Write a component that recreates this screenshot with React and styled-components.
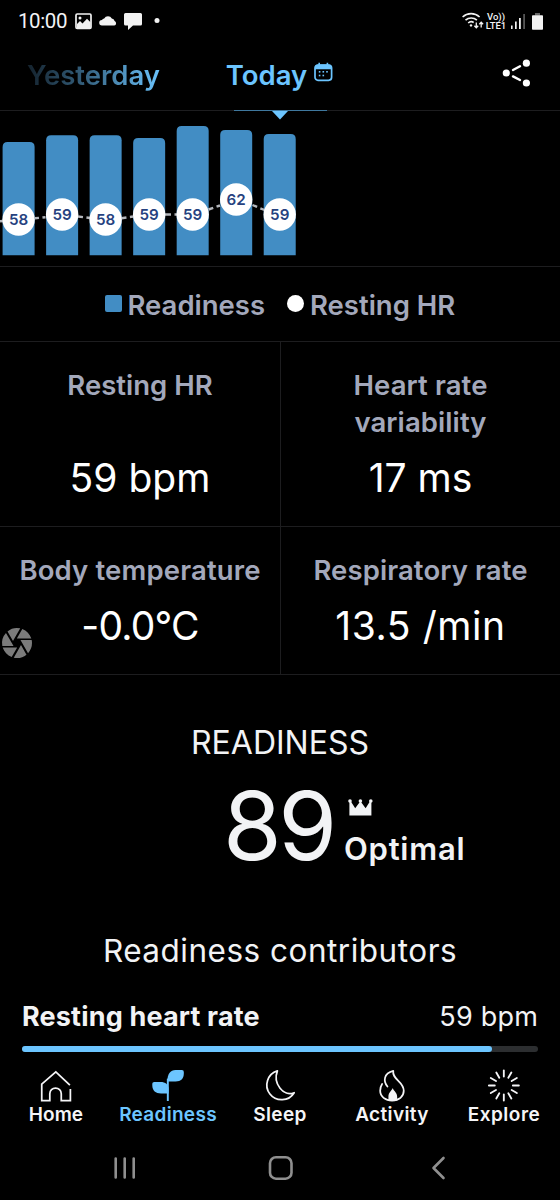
import React from "react";
import styled, { createGlobalStyle } from "styled-components";
import { MdCamera } from "react-icons/md";

const Global = createGlobalStyle`
  * { box-sizing: border-box; }
  html, body { margin: 0; background: #000; }
  body { font-family: Inter, "Liberation Sans", sans-serif; color: #f2f3f5; }
  svg { display: block; flex: none; }
`;

const blue = "#6cc5ff";
const muted = "#a3a8bb";
const rule = "#1d1d1f";

const Screen = styled.div`
  position: relative;
  width: 560px;
  height: 1200px;
  overflow: hidden;
  background: #000;
  display: flex;
  flex-direction: column;
`;

const Label = styled.span`
  font-size: ${(p) => p.$size}px;
  font-weight: ${(p) => p.$weight || 400};
  letter-spacing: ${(p) => p.$ls || 0}px;
  line-height: ${(p) => p.$lh || p.$size}px;
  color: ${(p) => p.$color || "inherit"};
  white-space: pre;
`;

const StatusBar = styled.header`
  height: 42px;
  padding: 0 17px 0 18px;
  display: flex;
  align-items: center;
  justify-content: space-between;
`;
const StatusGroup = styled.div`
  display: flex;
  align-items: center;
  gap: ${(p) => p.$gap || 0}px;
  margin-left: ${(p) => p.$ml || 0}px;
`;
const Clock = styled.span`
  font: 400 20.5px/24px Roboto, sans-serif;
  letter-spacing: -0.4px;
  width: 57px;
`;
const Network = styled.div`
  font: 500 9.5px/9.5px Roboto, sans-serif;
  width: 24px;
  text-align: center;
  margin: 0 3px 0 0;
`;

const DayNav = styled.nav`
  height: 69px;
  display: grid;
  grid-template-columns: 1fr 1fr 1fr;
  align-items: center;
  border-bottom: 1px solid ${rule};
  padding: 0 29px 3px 27px;
  position: relative;
`;
const Yesterday = styled(Label)`
  line-height: 36px;
  background: linear-gradient(90deg, #14222d 0%, #35617f 35%, ${blue} 80%);
  background-clip: text;
  -webkit-background-clip: text;
  color: transparent;
`;
const Today = styled.div`
  display: flex;
  justify-content: center;
  align-items: center;
  gap: 7px;
  color: ${blue};
  padding-left: 1px;
  svg { margin-top: -6px; }
`;
const Share = styled.div`
  justify-self: end;
  margin-top: -4px;
`;
const ActiveMark = styled.div`
  position: absolute;
  left: 233.5px;
  top: 68px;
  width: 93px;
  border-top: 1px solid #3f789e;
  display: flex;
  justify-content: center;
`;

const ChartPanel = styled.section`
  height: 156px;
  border-bottom: 1px solid ${rule};
`;

const Legend = styled.div`
  height: 75px;
  border-bottom: 1px solid ${rule};
  display: flex;
  align-items: center;
  padding-left: 104.5px;
  padding-top: 4px;
`;
const Swatch = styled.i`
  width: 17px;
  height: 17px;
  margin: -5px ${(p) => p.$gap}px 0 0;
  border-radius: ${(p) => (p.$round ? "50%" : "2px")};
  background: ${(p) => (p.$round ? "#fff" : "#428dc4")};
`;
const LegendItem = styled.div`
  display: flex;
  align-items: center;
  width: ${(p) => p.$w}px;
`;

const Metrics = styled.section`
  display: grid;
  grid-template-columns: 281px 279px;
  grid-template-rows: 185px 148px;
`;
const Metric = styled.div`
  display: flex;
  flex-direction: column;
  align-items: center;
  justify-content: space-between;
  padding: 25px 0 24px;
  text-align: center;
  border-bottom: 1px solid ${rule};
  &:nth-child(odd) { border-right: 1px solid ${rule}; }
`;

const Score = styled.section`
  padding-top: 49px;
  display: flex;
  flex-direction: column;
  align-items: center;
`;
const ScoreRow = styled.div`
  display: flex;
  height: 96px;
  margin-top: 16px;
  align-self: stretch;
  padding-left: 223px;
`;
const ScoreNumber = styled(Label)`
  width: 121px;
`;
const Rating = styled.div`
  display: flex;
  flex-direction: column;
  padding-top: 21px;
  gap: 15px;
`;
const Crown = styled.div`
  padding-left: 3.5px;
`;

const Contributors = styled.section`
  margin-top: 58px;
  padding: 0 22px;
  display: flex;
  flex-direction: column;
`;
const ContributorsTitle = styled(Label)`
  text-align: center;
`;
const ContributorRow = styled.div`
  display: flex;
  justify-content: space-between;
  margin: 29px 0 11px;
`;
const Track = styled.div`
  height: 6px;
  border-radius: 3px;
  background: #2c2e30;
`;
const Fill = styled.div`
  height: 6px;
  width: 91%;
  border-radius: 3px;
  background: ${blue};
`;

const TabBar = styled.nav`
  display: grid;
  grid-template-columns: repeat(5, 1fr);
  padding-top: 17px;
`;
const Tab = styled.div`
  display: flex;
  flex-direction: column;
  align-items: center;
  gap: 3px;
  color: ${(p) => (p.$active ? blue : "#f5f5f7")};
`;

const SystemBar = styled.footer`
  display: flex;
  align-items: center;
  justify-content: space-between;
  padding: 0 113px 0 112px;
  margin-top: 31px;
`;

const FloatingShutter = styled.div`
  position: absolute;
  left: -1.5px;
  top: 625px;
  color: #7b7b7b;
`;

const bars = [
  { top: 142, y: 219.5, v: 58 },
  { top: 135.3, y: 214.5, v: 59 },
  { top: 135.3, y: 219.5, v: 58 },
  { top: 138, y: 214.5, v: 59 },
  { top: 126, y: 214.5, v: 59 },
  { top: 130, y: 199.5, v: 62 },
  { top: 134, y: 214.5, v: 59 },
];
const barX = (i) => 18.6 + i * 43.52;

function Chart() {
  return (
    <svg width="560" height="155" viewBox="0 111 560 155">
      {bars.map((b, i) => (
        <path
          key={i}
          fill="#428dc4"
          d={`M${barX(i) - 16} 255.3V${b.top + 5}q0-5 5-5h22q5 0 5 5V255.3z`}
        />
      ))}
      <g fill="none" stroke="#b4b7bc" strokeWidth="2.4">
        <path d="M0 221.3L3 221" />
        <path d="M35 218.3L45.5 217.2" strokeDasharray="4 3.5" />
        <path d="M78 216.5L90 218" strokeDasharray="5 3.5" />
        <path d="M121.5 218.2L133 216.5" strokeDasharray="5 3.5" />
        <path d="M165 214.5H177" strokeDasharray="6 3.5" />
        <path d="M208.5 209.5L220 205.5" strokeDasharray="5 3.5" />
        <path d="M252.5 205L264.5 210" strokeDasharray="5 3.5" />
      </g>
      {bars.map((b, i) => (
        <g key={i}>
          <circle cx={barX(i)} cy={b.y} r="16.2" fill="#fff" />
          <text
            x={barX(i)}
            y={b.y + 5.5}
            textAnchor="middle"
            fontSize="15.2"
            fontWeight="600"
            fill="#26427f"
          >
            {b.v}
          </text>
        </g>
      ))}
    </svg>
  );
}

const PhotoIcon = () => (
  <svg width="17" height="17" viewBox="0 0 17 17">
    <rect x="1" y="1" width="15" height="14.5" rx="1.2" fill="none" stroke="#f2f2f2" strokeWidth="1.7" />
    <circle cx="5" cy="5" r="1.5" fill="#f2f2f2" />
    <path d="M2 13V11l3-3 2.5 2.5L12 5.8l3.5 3.4V15H2z" fill="#f2f2f2" />
  </svg>
);
const CloudIcon = () => (
  <svg width="18" height="12" viewBox="0 0 18 12">
    <path d="M3 10.5a2.8 2.8 0 0 1 0-5.6 2.6 2.6 0 0 1 2.2-1.5A4.3 4.3 0 0 1 12.800 3.500a3.600 3.600 0 0 1 2.800 2.600 2.300 2.300 0 0 1-.3 4.400z" fill="#f2f2f2" />
  </svg>
);
const ChatIcon = () => (
  <svg width="18" height="17" viewBox="0 0 18 17">
    <path d="M1.500 0h15A1.500 1.500 0 0 1 18 1.500V11a1.500 1.500 0 0 1-1.500 1.500H9L4 17v-4.500H1.500A1.500 1.500 0 0 1 0 11V1.500A1.500 1.500 0 0 1 1.500 0z" fill="#f2f2f2" />
  </svg>
);
const DotIcon = () => (
  <svg width="6" height="6" viewBox="0 0 6 6"><circle cx="3" cy="2.5" r="2.5" fill="#f2f2f2" /></svg>
);
const WifiIcon = () => (
  <svg width="22" height="18" viewBox="0 0 22 18" fill="none" stroke="#f2f2f2" strokeWidth="1.6">
    <path d="M.6 5a12.500 12.500 0 0 1 17 0M3.500 8.200a8.400 8.400 0 0 1 11.400 0M6.200 11a4.500 4.500 0 0 1 5.500-.5" />
    <circle cx="9" cy="13.4" r="1.2" fill="#f2f2f2" stroke="none" />
    <path d="M14.300 10.500v5M12.400 13.700l1.900 2 1.900-2M19.200 15.500v-5M17.300 12.300l1.900-2 1.900 2" strokeWidth="1.3" />
  </svg>
);
const SignalIcon = () => (
  <svg width="15" height="17" viewBox="0 0 15 17" fill="#f2f2f2">
    <rect x="0" y="12.5" width="1.6" height="3.5" />
    <rect x="4" y="8.5" width="1.7" height="7.5" />
    <rect x="8" y="5" width="1.8" height="11" />
    <rect x="12.2" y="1" width="1.8" height="15" fill="#555" />
  </svg>
);
const BatteryIcon = () => (
  <svg width="11" height="17" viewBox="0 0 11 17">
    <rect x="3" y="0" width="5" height="2.5" fill="#666" />
    <rect x="0" y="2.3" width="11" height="14.5" rx=".8" fill="#f2f2f2" />
  </svg>
);
const CalendarIcon = () => (
  <svg width="19" height="20" viewBox="0 0 19 20">
    <rect x="1" y="3" width="16.6" height="15.3" rx="3" fill="none" stroke={blue} strokeWidth="1.7" />
    <path d="M1 7.3V5.500A3 3 0 0 1 4 2.600h10.600a3 3 0 0 1 3 2.900V7.3z" fill={blue} />
    <path d="M5.200.8v3M13.400.8v3" stroke={blue} strokeWidth="1.6" />
    <g fill={blue}>
      <rect x="8.5" y="9" width="1.6" height="1.6" /><rect x="4.8" y="9" width="1.6" height="1.6" />
      <rect x="12.2" y="9" width="1.6" height="1.6" /><rect x="4.8" y="12.7" width="1.6" height="1.6" />
      <rect x="8.5" y="12.7" width="1.6" height="1.6" />
    </g>
  </svg>
);
const ShareIcon = () => (
  <svg width="29" height="28" viewBox="0 0 29 28" fill="#fff">
    <circle cx="4.3" cy="14" r="3.6" /><circle cx="24.4" cy="4.2" r="3.6" /><circle cx="24.4" cy="24" r="3.6" />
    <path d="M11 11l7-3.700M11 17.400l7 3.600" stroke="#fff" strokeWidth="2.4" strokeLinecap="round" />
  </svg>
);
const CrownIcon = () => (
  <svg width="25" height="17" viewBox="0 0 25 17" fill="#f2f3f5">
    <circle cx="2" cy="2" r="1.8" /><circle cx="12.4" cy="2" r="1.8" /><circle cx="22.8" cy="2" r="1.8" />
    <path d="M1.400 2.500L2.600 2l4.600 7.300L11.800 3h1.200l4.600 6.300L22.200 2l1.200.5V16.500H1.400z" />
  </svg>
);

const tabIcon = { width: 33, height: 33, viewBox: "0.7 0 34 34", fill: "none", stroke: "currentColor", strokeWidth: 1.8 };
const HomeIcon = () => (
  <svg {...tabIcon}><path d="M31.500 16.500L17 3 2.500 15.500V32.500h8.300V25.500a5.900 5.900 0 0 1 11.800 0v7h9.400V20.500" /></svg>
);
const LeafIcon = () => (
  <svg {...tabIcon}>
    <path d="M17 33V10" strokeWidth="2" />
    <path d="M16.500 13C16.500 5 19.500 1 25 1h6.500q2 0 2 2v1.500c0 5.500-3 8.500-8.500 8.500z" fill="currentColor" stroke="none" />
    <path d="M3 13.300h6.500c5 0 8.300 2.700 8.300 7V25.300H10c-5.500 0-9-3-9-8.500v-1.500q0-2 2-2z" fill="currentColor" stroke="none" />
  </svg>
);
const MoonIcon = () => (
  <svg {...tabIcon}><path d="M14.500 1.900A15.200 15.200 0 1 0 31.800 24.400C21 29 9.500 15 14.500 1.900z" strokeLinejoin="round" /></svg>
);
const FlameIcon = () => (
  <svg {...tabIcon} strokeLinecap="round" strokeLinejoin="round">
    <path d="M12.500 18C8 12.500 8.500 4.500 18.500 2c-1.500 9 10.800 10.500 10.800 20.500 0 6-5 10-12 10S5 28.500 5 22.500c0-3 .7-5 2-7" />
    <path d="M18 19.500c-1 2.500-4.500 4.500-4.500 9v4h9v-4c0-4.500-3.500-5.500-4.500-9z" fill="currentColor" stroke="none" />
  </svg>
);
const BurstIcon = () => (
  <svg {...tabIcon} strokeWidth="1.9" strokeLinecap="round">
    {[...Array(12)].map((_, i) => (
      <path key={i} d="M17 1.500v6.200" transform={`rotate(${i * 30} 17 17)`} />
    ))}
  </svg>
);

const metrics = [
  { name: "Resting HR", value: "59 bpm" },
  { name: "Heart rate\nvariability", value: "17 ms", nameLs: 0.1 },
  { name: "Body temperature", value: "-0.0°C", nameLs: 0.15, ls: -0.8 },
  { name: "Respiratory rate", value: "13.5 /min", nameLs: 0.1, ls: 0.6 },
];

const tabs = [
  { name: "Home", Icon: HomeIcon, ls: 0.05 },
  { name: "Readiness", Icon: LeafIcon, ls: 0.3, active: true },
  { name: "Sleep", Icon: MoonIcon, ls: 0.4 },
  { name: "Activity", Icon: FlameIcon, ls: 0.35 },
  { name: "Explore", Icon: BurstIcon, ls: 0.5 },
];

export default function App() {
  return (
    <Screen>
      <Global />
      <StatusBar>
        <StatusGroup>
          <Clock>10:00</Clock>
          <StatusGroup $gap={7}>
            <PhotoIcon /><CloudIcon /><ChatIcon />
          </StatusGroup>
          <StatusGroup $ml={12}><DotIcon /></StatusGroup>
        </StatusGroup>
        <StatusGroup>
          <WifiIcon />
          <Network>Vo))<br />LTE1</Network>
          <SignalIcon />
          <StatusGroup $ml={6}><BatteryIcon /></StatusGroup>
        </StatusGroup>
      </StatusBar>

      <DayNav>
        <Yesterday $size={27.5} $weight={600}>Yesterday</Yesterday>
        <Today>
          <Label $size={27.5} $weight={600} $lh={36}>Today</Label>
          <CalendarIcon />
        </Today>
        <Share><ShareIcon /></Share>
        <ActiveMark>
          <svg width="16" height="9" viewBox="0 0 16 9"><path d="M0 0h16L8 8.500z" fill={blue} /></svg>
        </ActiveMark>
      </DayNav>

      <ChartPanel><Chart /></ChartPanel>

      <Legend>
        <LegendItem $w={182.5}>
          <Swatch $gap={6} />
          <Label $size={27.5} $weight={600} $color={muted}>Readiness</Label>
        </LegendItem>
        <LegendItem $w={170}>
          <Swatch $round $gap={6} />
          <Label $size={27.5} $weight={600} $color={muted}>Resting HR</Label>
        </LegendItem>
      </Legend>

      <Metrics>
        {metrics.map((m) => (
          <Metric key={m.name}>
            <Label $size={27.5} $lh={37} $weight={600} $ls={m.nameLs} $color={muted}>{m.name}</Label>
            <Label $size={39} $lh={48} $ls={m.ls} $color="#fff">{m.value}</Label>
          </Metric>
        ))}
      </Metrics>

      <Score>
        <Label $size={32} $lh={38}>READINESS</Label>
        <ScoreRow>
          <ScoreNumber $size={95} $lh={96} $ls={-3.5}>89</ScoreNumber>
          <Rating>
            <Crown><CrownIcon /></Crown>
            <Label $size={31} $lh={36} $weight={600} $ls={0.75}>Optimal</Label>
          </Rating>
        </ScoreRow>
      </Score>

      <Contributors>
        <ContributorsTitle $size={31.5} $lh={38} $ls={0.5}>Readiness contributors</ContributorsTitle>
        <ContributorRow>
          <Label $size={27} $lh={36} $weight={700} $ls={0.17}>Resting heart rate</Label>
          <Label $size={27} $lh={36} $ls={0.2}>59 bpm</Label>
        </ContributorRow>
        <Track><Fill /></Track>
      </Contributors>

      <TabBar>
        {tabs.map(({ name, Icon, ls, active }) => (
          <Tab key={name} $active={active}>
            <Icon />
            <Label $size={19} $weight={600} $ls={ls}>{name}</Label>
          </Tab>
        ))}
      </TabBar>

      <SystemBar>
        <svg width="24" height="24" viewBox="0 0 24 24" stroke="#8f8f8f" strokeWidth="2.6" strokeLinecap="round">
          <path d="M3.700 2.500v19M12.700 2.500v19M21.700 2.500v19" />
        </svg>
        <svg width="31" height="26" viewBox="0 0 31 26" fill="none" stroke="#8f8f8f" strokeWidth="2.6">
          <rect x="2" y="2.2" width="21.5" height="21.5" rx="6" />
        </svg>
        <svg width="16" height="24" viewBox="0 0 16 24" fill="none" stroke="#8f8f8f" strokeWidth="2.6" strokeLinecap="round" strokeLinejoin="round">
          <path d="M12.500 2L2.500 12l10 10" />
        </svg>
      </SystemBar>

      <FloatingShutter><MdCamera size={36} /></FloatingShutter>
    </Screen>
  );
}
